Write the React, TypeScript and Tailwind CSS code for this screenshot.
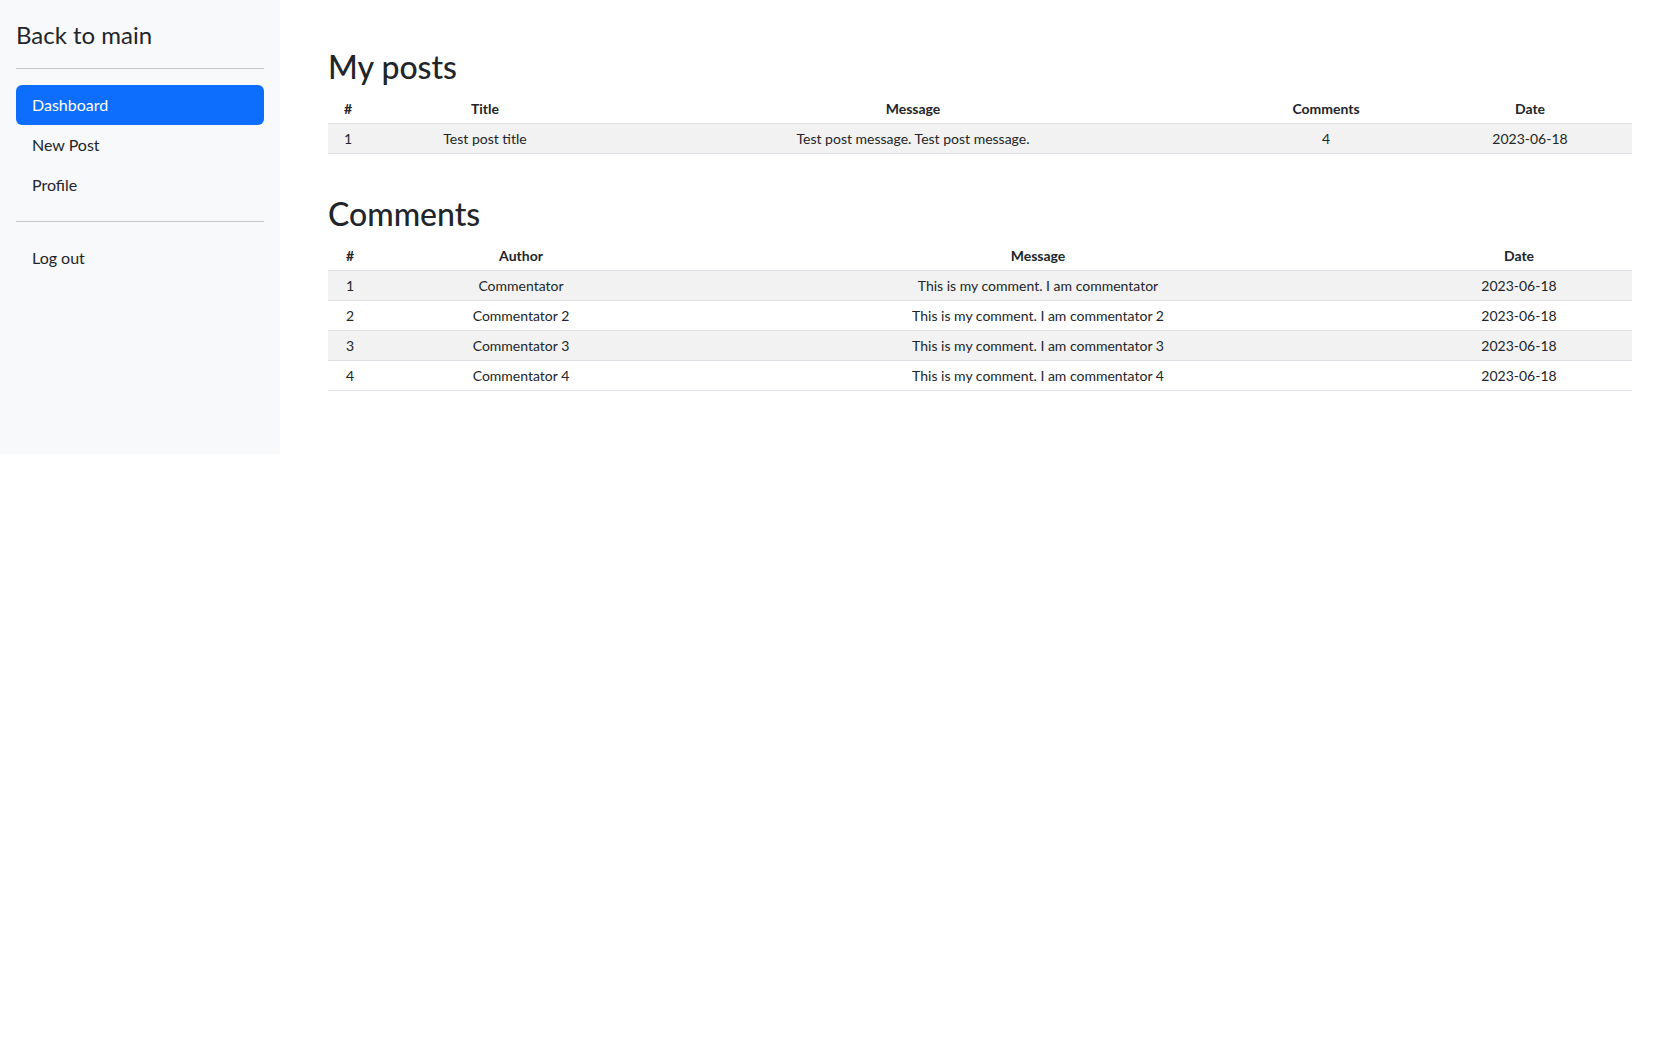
import { ReactNode } from "react";

type Col = { label: string; width: string };

const postCols: Col[] = [
  { label: "#", width: "w-[40px]" },
  { label: "Title", width: "w-[234px]" },
  { label: "Message", width: "w-[622px]" },
  { label: "Comments", width: "w-[204px]" },
  { label: "Date", width: "w-[204px]" },
];

const commentCols: Col[] = [
  { label: "#", width: "w-[44px]" },
  { label: "Author", width: "w-[298px]" },
  { label: "Message", width: "w-[736px]" },
  { label: "Date", width: "w-[226px]" },
];

const posts = [["1", "Test post title", "Test post message. Test post message.", "4", "2023-06-18"]];

const comments = [1, 2, 3, 4].map((n) => [
  String(n),
  n === 1 ? "Commentator" : `Commentator ${n}`,
  n === 1 ? "This is my comment. I am commentator" : `This is my comment. I am commentator ${n}`,
  "2023-06-18",
]);

function DataTable({ cols, rows }: { cols: Col[]; rows: string[][] }) {
  return (
    <table className="w-full table-fixed border-collapse text-center text-[14px] leading-[21px] text-[#212529]">
      <colgroup>
        {cols.map((c) => (
          <col key={c.label} className={c.width} />
        ))}
      </colgroup>
      <thead>
        <tr className="border-b border-[#dee2e6]">
          {cols.map((c) => (
            <th key={c.label} className="px-1 py-1 font-bold">
              {c.label}
            </th>
          ))}
        </tr>
      </thead>
      <tbody>
        {rows.map((row, i) => (
          <tr key={i} className={`border-b border-[#dee2e6] ${i % 2 === 0 ? "bg-[#f2f2f2]" : "bg-white"}`}>
            {row.map((cell, j) => (
              <td key={j} className="px-1 py-1">
                {cell}
              </td>
            ))}
          </tr>
        ))}
      </tbody>
    </table>
  );
}

function NavLink({ children, active }: { children: ReactNode; active?: boolean }) {
  return (
    <a
      href="#"
      className={`block rounded-[6px] px-4 py-2 text-[16px] leading-6 ${
        active ? "bg-[#0d6efd] text-white" : "text-[#212529]"
      }`}
    >
      {children}
    </a>
  );
}

export default function App() {
  return (
    <div className="flex min-h-[1050px] items-start bg-white font-['Lato',sans-serif] text-[#212529]">
      {/* sidebar */}
      <aside className="flex h-[454px] w-[280px] shrink-0 flex-col bg-[#f8f9fa] p-4">
        <a href="#" className="pt-px text-[24px] leading-[35px] text-[#212529]">
          Back to main
        </a>
        <hr className="my-4 border-t border-[#c4c5c6]" />
        <ul className="flex flex-col">
          <li>
            <NavLink active>Dashboard</NavLink>
          </li>
          <li>
            <NavLink>New Post</NavLink>
          </li>
          <li>
            <NavLink>Profile</NavLink>
          </li>
        </ul>
        <hr className="my-4 border-t border-[#c4c5c6]" />
        <NavLink>Log out</NavLink>
      </aside>

      {/* main */}
      <main className="flex-1 px-12 pt-[48px]">
        <h2 className="mb-2 text-[32px] leading-[38px] font-medium">My posts</h2>
        <DataTable cols={postCols} rows={posts} />

        <h2 className="mt-[41px] mb-2 text-[32px] leading-[38px] font-medium">Comments</h2>
        <DataTable cols={commentCols} rows={comments} />
      </main>
    </div>
  );
}
